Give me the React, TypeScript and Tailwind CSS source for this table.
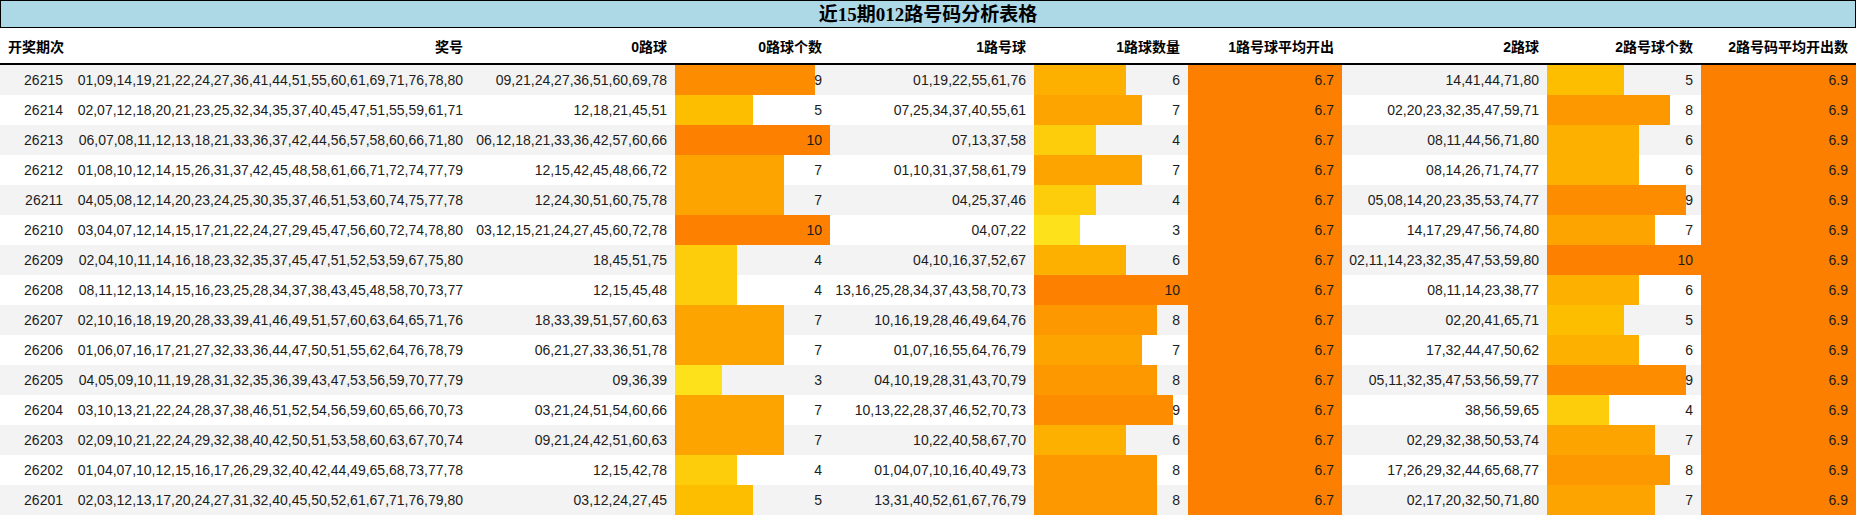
import React from 'react';

const draws: [string, string][] = [
  ['26215', '01,09,14,19,21,22,24,27,36,41,44,51,55,60,61,69,71,76,78,80'],
  ['26214', '02,07,12,18,20,21,23,25,32,34,35,37,40,45,47,51,55,59,61,71'],
  ['26213', '06,07,08,11,12,13,18,21,33,36,37,42,44,56,57,58,60,66,71,80'],
  ['26212', '01,08,10,12,14,15,26,31,37,42,45,48,58,61,66,71,72,74,77,79'],
  ['26211', '04,05,08,12,14,20,23,24,25,30,35,37,46,51,53,60,74,75,77,78'],
  ['26210', '03,04,07,12,14,15,17,21,22,24,27,29,45,47,56,60,72,74,78,80'],
  ['26209', '02,04,10,11,14,16,18,23,32,35,37,45,47,51,52,53,59,67,75,80'],
  ['26208', '08,11,12,13,14,15,16,23,25,28,34,37,38,43,45,48,58,70,73,77'],
  ['26207', '02,10,16,18,19,20,28,33,39,41,46,49,51,57,60,63,64,65,71,76'],
  ['26206', '01,06,07,16,17,21,27,32,33,36,44,47,50,51,55,62,64,76,78,79'],
  ['26205', '04,05,09,10,11,19,28,31,32,35,36,39,43,47,53,56,59,70,77,79'],
  ['26204', '03,10,13,21,22,24,28,37,38,46,51,52,54,56,59,60,65,66,70,73'],
  ['26203', '02,09,10,21,22,24,29,32,38,40,42,50,51,53,58,60,63,67,70,74'],
  ['26202', '01,04,07,10,12,15,16,17,26,29,32,40,42,44,49,65,68,73,77,78'],
  ['26201', '02,03,12,13,17,20,24,27,31,32,40,45,50,52,61,67,71,76,79,80'],
];

// 按除3余数分组
const rows = draws.map(([issue, nums]) => {
  const list = nums.split(',');
  const road = (r: number) => list.filter((n) => parseInt(n, 10) % 3 === r);
  return { issue, nums, r0: road(0), r1: road(1), r2: road(2) };
});

const avg1 = (rows.reduce((s, r) => s + r.r1.length, 0) / rows.length).toFixed(1);
const avg2 = (rows.reduce((s, r) => s + r.r2.length, 0) / rows.length).toFixed(1);

const barColors: Record<number, string> = {
  0: 'bg-[#fff0a0]',
  1: 'bg-[#fff070]',
  2: 'bg-[#ffea40]',
  3: 'bg-[#fde11a]',
  4: 'bg-[#fdcc0a]',
  5: 'bg-[#fdbe00]',
  6: 'bg-[#fdb000]',
  7: 'bg-[#fda400]',
  8: 'bg-[#fd9800]',
  9: 'bg-[#fd8c00]',
  10: 'bg-[#fd8000]',
};

const grid =
  'grid grid-cols-[71px_400px_204px_155px_204px_154px_154px_205px_154px_155px]';

const headers = [
  '开奖期次',
  '奖号',
  '0路球',
  '0路球个数',
  '1路号球',
  '1路球数量',
  '1路号球平均开出',
  '2路球',
  '2路号球个数',
  '2路号码平均开出数',
];

const Bar: React.FC<{ value: number }> = ({ value }) => (
  <div className="relative h-full">
    <div
      className={`absolute left-0 top-0 h-full ${barColors[Math.min(value, 10)]}`}
      style={{ width: `${(Math.min(value, 10) / 10) * 100}%` }}
    />
    <div className="relative flex h-full items-center justify-end px-2">{value}</div>
  </div>
);

const Cell: React.FC<{ children: React.ReactNode; className?: string }> = ({ children, className = '' }) => (
  <div className={`flex h-full items-center justify-end whitespace-nowrap px-2 ${className}`}>{children}</div>
);

export default function App() {
  return (
    <div className="w-[1856px] bg-white font-['Liberation_Sans','Noto_Sans_CJK_SC',sans-serif] text-[14px] text-[#1c1c1c]">
      <div className="flex h-[28px] items-center justify-center border border-black bg-[#add8e6] font-['Liberation_Serif','Noto_Sans_CJK_SC',serif] text-[19px] font-bold leading-none text-black">
        近15期012路号码分析表格
      </div>

      <div className={`${grid} h-[37px] border-b-2 border-black font-bold text-black`}>
        {headers.map((h, i) => (
          <div
            key={h}
            className={`flex items-end whitespace-nowrap px-2 pb-[5px] ${i === 0 ? 'justify-start' : 'justify-end'}`}
          >
            {h}
          </div>
        ))}
      </div>

      {rows.map((r, i) => (
        <div key={r.issue} className={`${grid} h-[30px] ${i % 2 === 0 ? 'bg-[#f3f3f3]' : 'bg-white'}`}>
          <Cell>{r.issue}</Cell>
          <Cell>{r.nums}</Cell>
          <Cell>{r.r0.join(',')}</Cell>
          <Bar value={r.r0.length} />
          <Cell>{r.r1.join(',')}</Cell>
          <Bar value={r.r1.length} />
          <Cell className="bg-[#fc7f00]">{avg1}</Cell>
          <Cell>{r.r2.join(',')}</Cell>
          <Bar value={r.r2.length} />
          <Cell className="bg-[#fc7f00]">{avg2}</Cell>
        </div>
      ))}
    </div>
  );
}
